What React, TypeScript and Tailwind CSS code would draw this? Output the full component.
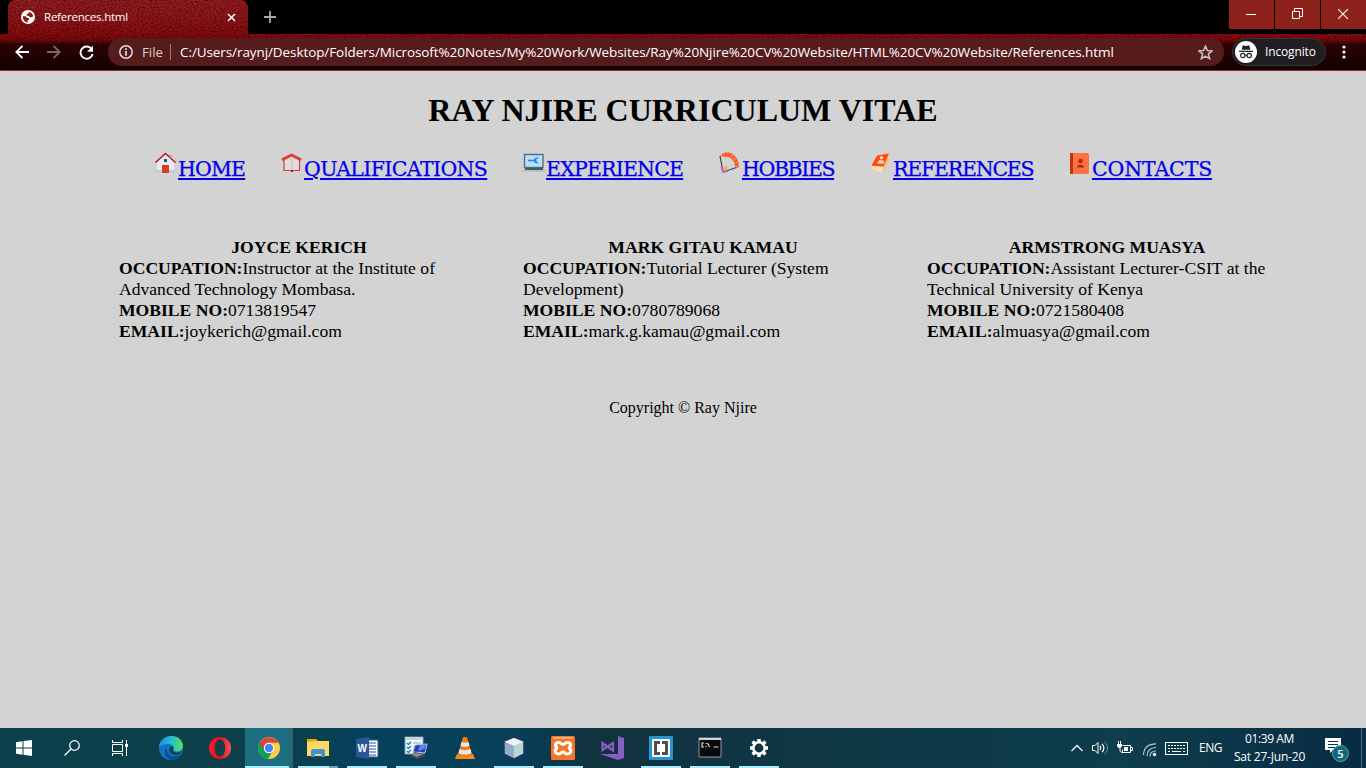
import type { ReactNode } from "react";

const ui = "font-['Open_Sans','Noto_Sans',sans-serif]";

function Svg({ w, h, vb, children, className = "" }: { w: number; h: number; vb?: string; children: ReactNode; className?: string }) {
  return (
    <svg width={w} height={h} viewBox={vb ?? `0 0 ${w} ${h}`} fill="none" className={`block shrink-0 ${className}`}>
      {children}
    </svg>
  );
}

function Texture({ id, w, h, shade }: { id: string; w: number; h: number; shade: ReactNode }) {
  return (
    <svg width={w} height={h} className="absolute inset-0">
      <defs>
        <linearGradient id={`${id}g`} x1="0" y1="0" x2="0" y2="1">{shade}</linearGradient>
        <filter id={`${id}n`} x="0" y="0" width="100%" height="100%">
          <feTurbulence type="fractalNoise" baseFrequency="0.7" numOctaves="2" seed="8" />
          <feColorMatrix values="0 0 0 0 0  0 0 0 0 0  0 0 0 0 0  1.3 0 0 0 -0.5" />
        </filter>
      </defs>
      <rect width={w} height={h} fill={`url(#${id}g)`} />
      <rect width={w} height={h} filter={`url(#${id}n)`} />
    </svg>
  );
}

function Tabs() {
  return (
    <div className="flex h-[34px] bg-[#030000]">
      <div className="relative ml-2 h-[34px] w-[240px] overflow-hidden rounded-t-lg bg-[#8b1216]">
        <Texture id="tab" w={240} h={34} shade={<><stop stopColor="#9c1d21" /><stop offset=".6" stopColor="#961619" /><stop offset="1" stopColor="#900a0e" /></>} />
        <div className="relative flex h-full items-center pl-[13px] pr-[12px]">
          <Svg w={14} h={14}>
            <circle cx="7" cy="7" r="7" fill="white" />
            <path d="M2 6.200h2.600l1.700 1.700H8v1.500L6.600 10.800v1.600C3.800 12.200 1.600 9.800 2 6.200ZM8.200 1.900c2 .5 3.600 2 4 4.400l-1.400 1H9L7.600 5.800H5.800V4.200l1.500-.6Z" fill="#8f171a" />
          </Svg>
          <span className={`${ui} ml-[9px] w-[84px] whitespace-nowrap text-[11.5px] leading-4 tracking-[-0.22px] text-[#fff]`}>References.html</span>
          <Svg w={9} h={9} className="ml-auto"><path d="m1 1 7 7M8 1 1 8" stroke="white" strokeWidth="1.5" /></Svg>
        </div>
      </div>
      <Svg w={12} h={12} className="ml-4 mt-[11px]"><path d="M6 0v12M0 6h12" stroke="#aaa" strokeWidth="1.8" /></Svg>
      <div className="ml-auto flex h-[29px] gap-px">
        <div className="grid w-[45px] place-items-center bg-[#8d211c]"><Svg w={10} h={10} className="-ml-0.5 -mt-0.5"><path d="M0 5.5h10" stroke="white" /></Svg></div>
        <div className="grid w-[45px] place-items-center bg-[#8d211c]"><Svg w={11} h={11} className="-mt-0.5"><path d="M.5 3.5h7v7h-7zM2.5 3.5v-3h8v8h-3" stroke="white" /></Svg></div>
        <div className="grid w-[45px] place-items-center bg-[#8d211c]"><Svg w={10} h={10} className="-ml-0.5 -mt-0.5"><path d="m0 0 10 10M10 0 0 10" stroke="white" strokeWidth="1.1" /></Svg></div>
      </div>
    </div>
  );
}

function Toolbar() {
  return (
    <div className="relative h-[37px] border-b border-[#8e2a2c]">
      <Texture id="bar" w={1366} h={36} shade={<><stop stopColor="#920a0f" /><stop offset=".16" stopColor="#7f080c" /><stop offset=".3" stopColor="#300304" /><stop offset="1" stopColor="#180102" /></>} />
      <div className="relative flex h-[36px] items-center">
        <Svg w={14} h={14} className="ml-[15px]"><path d="M14 7H1.5M7.5.8 1.3 7l6.2 6.2" stroke="white" strokeWidth="1.8" /></Svg>
        <Svg w={14} h={14} className="ml-[18px]"><path d="M0 7h12.5M6.5.8 12.7 7l-6.2 6.2" stroke="#816868" strokeWidth="1.8" /></Svg>
        <Svg w={15} h={15} className="ml-[18px]"><path d="M12.6 4A6.1 6.1 0 1 0 13.6 9" stroke="white" strokeWidth="1.9" /><path d="M14 .8v6H8Z" fill="white" /></Svg>
        <div className={`${ui} ml-[14px] flex h-7 w-[1116px] items-center rounded-full bg-[#561b1c] pl-[11px] leading-7`}>
          <Svg w={14} h={14}><circle cx="7" cy="7" r="6.2" stroke="#ddd" strokeWidth="1.5" /><path d="M7 6v4.7M7 3.2v1.7" stroke="#ddd" strokeWidth="1.7" /></Svg>
          <span className="ml-[9px] w-[22px] whitespace-nowrap text-[13.3px] text-[#ddcdcd]">File</span>
          <span className="ml-[6px] h-4 w-px bg-[#a07878]" />
          <span className="ml-[9px] w-[935px] whitespace-nowrap text-[13.5px] tracking-[-0.087px] text-white">C:/Users/raynj/Desktop/Folders/Microsoft%20Notes/My%20Work/Websites/Ray%20Njire%20CV%20Website/HTML%20CV%20Website/References.html</span>
          <Svg w={15} h={15} className="ml-auto mr-[11px]"><path d="m7.5 1 1.8 4.5 4.8.4-3.7 3 1.2 4.7-4.1-2.5-4.1 2.5 1.2-4.7-3.7-3 4.8-.4Z" stroke="#c9bdbd" strokeWidth="1.6" /></Svg>
        </div>
        <div className="ml-2 flex h-7 w-[94px] items-center rounded-full border border-[#3b3537] bg-[#211d20] pl-[2px]">
          <Svg w={22} h={22}>
            <circle cx="11" cy="11" r="11" fill="white" />
            <path d="M4 9.700h14v1.200H4zM6.600 8.800 7.800 4.200l3.200.7 3.200-.7 1.200 4.600Z" fill="#222" />
            <circle cx="7.800" cy="14.500" r="2.200" stroke="#222" strokeWidth="1.200" /><circle cx="14.200" cy="14.500" r="2.200" stroke="#222" strokeWidth="1.200" /><path d="M10 14.300h2" stroke="#222" />
          </Svg>
          <span className={`${ui} ml-[8px] whitespace-nowrap text-[12px] tracking-[-0.15px] text-white`}>Incognito</span>
        </div>
        <Svg w={4} h={14} className="ml-[16px]"><circle cx="2" cy="2" r="1.6" fill="white" /><circle cx="2" cy="7" r="1.6" fill="white" /><circle cx="2" cy="12" r="1.6" fill="white" /></Svg>
      </div>
    </div>
  );
}

const nav = [
  { label: "HOME", cls: "w-[67px] tracking-[-0.85px]", icon: <><path d="M3 10 11.5 2 20 10v10H3Z" fill="#e8eaf6" /><path d="M2 18h19v3H2z" fill="#c5cae9" /><path d="M8 13h7v8H8z" fill="#d84315" /><path d="M10 7h3v3h-3z" fill="#01579b" /><path d="m1.5 10.5 10-9 10 9" stroke="#b71c1c" strokeWidth="1.6" /><path d="M16 3h2v3h-2z" fill="#d79a94" /></> },
  { label: "QUALIFICATIONS", cls: "w-[183px] tracking-[-0.64px]", icon: <><path d="M4 8v10.500h8l.5.7.5-.7h6.500V8" stroke="#e53935" strokeWidth="1.200" /><path d="M5 8h13.500v10H5z" fill="#dedede" /><path d="M2 7.800 11.500 3 21 7.800" stroke="#e53935" strokeWidth="2.800" /><path d="M12 9v9" stroke="#b9b9b9" /><path d="M11 18h1.500v2H11z" fill="#a00000" /></> },
  { label: "EXPERIENCE", cls: "w-[137px] tracking-[-0.82px]", icon: <><path d="M2.500 2.500h18.500v13H2.500z" fill="#bbdefb" stroke="#546e7a" strokeWidth="1.400" /><path d="M6 8.500h6" stroke="#1e88e5" strokeWidth="1.600" /><path d="M17 6c-3-1-5 0-5 2.500s2 3.500 5 2.500l-2.500-1v-3Z" fill="#1e88e5" /><path d="M3 16h18v2.200H3z" fill="#455a64" /><path d="M0 18.300h24v1.400H0z" fill="#adc0c4" /></> },
  { label: "HOBBIES", cls: "w-[92px] tracking-[-1.4px]", icon: <><path d="M2 4 5 20M20 15 5 20" stroke="#37474f" strokeWidth="1.200" /><path d="M2 4C6-1.500 14-.5 18 5c2.500 3.500 3.500 8 2.500 11-1.500.3-2.500-.3-3.500-1.500 0-5-4-9.500-9-9.500-2.500.2-4.500 0-6-1Z" fill="#ff7043" /><path d="m8 1-.5 3.500M12 1.500l-1 3.500M16 4l-2 3M19 8l-3 2M20.500 12l-3.500 1" stroke="#d84315" strokeWidth=".8" /><circle cx="7.500" cy="16" r="1.900" fill="#ffa726" /><path d="m3.500 15 1.700 5 4.500-1" stroke="#ba68c8" strokeWidth="2.200" /></> },
  { label: "REFERENCES", cls: "w-[140px] tracking-[-1.22px]", icon: <><path d="m3 14 12-1 5-9-.3 5-6 11.500-1.700-.2L3 16.500Z" fill="#ffe0b2" /><path d="m14 15 5.500-10 .2 4-6 11.500Z" fill="#e6bf83" /><path d="m8 3.500 12-2-5.500 13-12-.8Z" fill="#ff4b12" /><circle cx="12.500" cy="5.800" r="1.700" fill="#ffd7c1" /><path d="m8 11.500 6.500.3.800-3-5-.8Z" fill="#ffd7c1" /></> },
  { label: "CONTACTS", cls: "w-[120px] tracking-[-0.14px]", icon: <><rect x="2" y="1" width="19" height="21" rx="1.500" fill="#ff7043" /><path d="M2 2c0-.6.400-1 1-1h2v21H3c-.6 0-1-.4-1-1Z" fill="#bf360c" /><circle cx="12.500" cy="9" r="2.200" fill="#a32e0a" /><path d="M9 15.500c0-3.700 7-3.700 7 0Z" fill="#a32e0a" /></> },
];

const people = [
  { name: "JOYCE KERICH", job: <>Instructor at the Institute of<br />Advanced Technology Mombasa.</>, mobile: "0713819547", email: "joykerich@gmail.com" },
  { name: "MARK GITAU KAMAU", job: <>Tutorial Lecturer (System<br />Development)</>, mobile: "0780789068", email: "mark.g.kamau@gmail.com" },
  { name: "ARMSTRONG MUASYA", job: <>Assistant Lecturer-CSIT at the<br />Technical University of Kenya</>, mobile: "0721580408", email: "almuasya@gmail.com" },
];

function Page() {
  return (
    <main className="flex h-[657px] flex-col bg-[#d3d3d3] font-['Liberation_Serif',serif] text-black">
      <h1 className="mt-[21px] text-center text-[32px] font-bold leading-[37px]">RAY NJIRE CURRICULUM VITAE</h1>
      <nav className="mt-[23px] flex h-[32px] gap-[35px] pl-[154px]">
        {nav.map((n) => (
          <div key={n.label} className="flex shrink-0">
            <Svg w={24} h={24}>{n.icon}</Svg>
            <a href="#" className={`mt-[3px] block whitespace-nowrap font-['DejaVu_Serif',serif] text-[20.5px] leading-[28px] text-[#0000ee] underline decoration-2 underline-offset-[2px] [-webkit-text-stroke:0.25px_#0000ee] ${n.cls}`}>{n.label}</a>
          </div>
        ))}
      </nav>
      <div className="mt-[53px] flex h-[105px] gap-[44px] pl-[119px] text-[17.6px] leading-[21px]">
        {people.map((p) => (
          <section key={p.name} className="w-[360px] shrink-0 whitespace-nowrap">
            <h2 className="text-center font-bold">{p.name}</h2>
            <p><b>OCCUPATION:</b>{p.job}</p>
            <p><b>MOBILE NO:</b>{p.mobile}</p>
            <p><b>EMAIL:</b>{p.email}</p>
          </section>
        ))}
      </div>
      <footer className="mt-[57px] text-center text-[16px] leading-[18px]">Copyright © Ray Njire</footer>
    </main>
  );
}

const apps: { id: string; on: boolean; icon: ReactNode }[] = [
  { id: "edge", on: false, icon: <><defs><linearGradient id="ea" x1="0" x2="1"><stop stopColor="#178ddb" /><stop offset=".55" stopColor="#28c1cc" /><stop offset="1" stopColor="#63dc55" /></linearGradient></defs><circle cx="12" cy="12" r="12" fill="#1273c5" /><path d="M0 11C1-3 23-4 24 10c0 5-6 7-10 4 3-5-5-9-14-3Z" fill="url(#ea)" /><path d="M8 12c-1 8 7 11 14 6-3 6-9 7-12 5-5-3-6-9-2-11Z" fill="#0c4d96" /><path d="M12 10c3 0 3 4 2 5 2 2 6 2 9 0-1 2-3 4-6 4-6 0-9-6-5-9Z" fill="#0b3f55" /></> },
  { id: "opera", on: false, icon: <><defs><linearGradient id="op"><stop stopColor="#ff1b2d" /><stop offset=".5" stopColor="#e30d20" /><stop offset="1" stopColor="#ff5257" /></linearGradient></defs><path fillRule="evenodd" d="M12 1a11 11 0 1 0 0 22 11 11 0 0 0 0-22Zm0 2.500c3 0 5.200 3.500 5.200 8.500S15 20.500 12 20.500 6.800 17 6.800 12 9 3.500 12 3.500Z" fill="url(#op)" /></> },
  { id: "chrome", on: true, icon: <><circle cx="12" cy="12" r="11" fill="#ffcd40" /><path d="M12 12 2.500 6.500A11 11 0 0 0 11 23l5-8.500Z" fill="#0f9d58" /><path d="M2.500 6.500A11 11 0 0 1 21.500 6.800H12A5.200 5.200 0 0 0 7.200 14Z" fill="#db4437" /><circle cx="12" cy="12" r="5.200" fill="white" /><circle cx="12" cy="12" r="4.200" fill="#4285f4" /></> },
  { id: "explorer", on: true, icon: <><path d="M1 3h9l2 2h11v15H1Z" fill="#f0a800" /><path d="M1 6l11-1h11v15H1Z" fill="#ffd765" /><path d="M5 21v-6c0-1 1-2 2-2h10c1 0 2 1 2 2v6h-4v-3H9v3Z" fill="#3d91d7" /></> },
  { id: "word", on: true, icon: <><path d="M12 4h11v17H12Z" fill="white" stroke="#2b579a" /><path d="M14 7h7M14 10h7M14 13h7M14 16h7M14 19h7" stroke="#2b579a" /><path d="m1 3 13-2v22L1 21Z" fill="#2b579a" /><text x="2.500" y="16" fontSize="10" fontWeight="bold" fontFamily="Liberation Sans" fill="white">W</text></> },
  { id: "system", on: true, icon: <><path d="M1 1h18v17H1Z" fill="#f5f7f9" stroke="#8097a8" /><path d="M1 1h18v3H1Z" fill="#c6d3dd" /><path d="m3 7 1.500 1.500L7 6M3 11l1.500 1.500L7 10M3 15l1.500 1.500L7 14" stroke="#1688c9" strokeWidth="1.500" /><path d="M9 7h8M9 11h3" stroke="#93a5b0" /><path d="m11 9 12-1-2 9-12-1Z" fill="#2040bb" stroke="#b8cad8" /><path d="m16 9 6-.5-1 4-7 3Z" fill="#5d82ed" /><path d="m10 16 11 2v2l-8 3-6-3Z" fill="#464957" /><path d="m10 17 9 1-6 3-5-2Z" fill="#8a8c99" /></> },
  { id: "vlc", on: false, icon: <><path d="M4 18h16l2 5H2Z" fill="#f08b18" /><path d="M10 1h4l5 18c-2 2-12 2-14 0Z" fill="#ef7b14" /><path d="m8.500 6-1 4c2 1 7 1 9 0l-1-4c-2 1-5 1-7 0ZM6.500 13l-1 4c3 2 10 2 13 0l-1-4c-3 1.500-8 1.500-11 0Z" fill="#e9e8e6" /></> },
  { id: "netbeans", on: true, icon: <><path d="m12 1 10 4v13l-10 5-10-5V5Z" fill="#c0d4e5" stroke="#24375f" strokeWidth="1.600" /><path d="m12 2 9 4-9 4-9-4Z" fill="#edf3f6" /><path d="m3 6 9 4v12l-9-5Z" fill="#8facc8" /><path d="m21 6-9 4v12l9-5Z" fill="#b9d6d0" /></> },
  { id: "xampp", on: true, icon: <><rect width="24" height="24" rx="1.500" fill="#f37623" /><path d="M2 1h20v2H2z" fill="#f3ac7d" /><path d="M8 6.500c-5 0-4 5-1 5.500-4 0-4 6 1 6 2 0 2-2 4-2s2 2 4 2c5 0 5-6 1-6 3-.5 4-5.500-1-5.500-2 0-2 2-4 2s-2-2-4-2Z" stroke="white" strokeWidth="3" /></> },
  { id: "vs", on: false, icon: <><path d="m18 0 6 2v20l-6 2-18-6h18Z" fill="#865fc5" /><path d="M2.500 7v7l10.500-7v7.500Z" stroke="#865fc5" strokeWidth="2.200" /></> },
  { id: "brackets", on: true, icon: <><rect width="24" height="24" rx="1" fill="#2196d5" /><rect x="3" y="3" width="18" height="18" fill="white" /><path d="M11 6.500H6.500v11H11M13 6.500h4.500v11H13" stroke="#505050" strokeWidth="3" /></> },
  { id: "terminal", on: true, icon: <><path d="M1 2h22v19H1z" fill="#080909" stroke="#92999d" /><path d="M1 2h22v2H1z" fill="#d1d5dc" /><path d="M6 7H4v4h2M8 7v1m0 2v1m1.500-4 2 4m4 0h5" stroke="#ddd" strokeWidth="1.200" /></> },
  { id: "settings", on: true, icon: <><circle cx="12" cy="12" r="5.700" stroke="white" strokeWidth="2.600" /><path d="M12 3v3M12 18v3M3 12h3M18 12h3m-15.400-6.400 2.200 2.200m8.400 8.400 2.200 2.200m0-12.800-2.200 2.200m-8.400 8.400-2.200 2.200" stroke="white" strokeWidth="3.500" /></> },
];

function Taskbar() {
  return (
    <footer className="flex h-10 bg-[linear-gradient(90deg,#0b404a_0%,#0c3f4a_21%,#06415b_26%,#063f58_38%,#11323f_43%,#0e3845_65%,#0e3d4c_82%,#082c43_100%)]">
      <div className="flex w-[147px] shrink-0">
        <div className="grid w-12 place-items-center"><Svg w={16} h={16}><path d="m0 2.200 6.500-.9v6.200H0ZM7.500 1.100 16 0v7.500H7.500ZM0 8.500h6.500v6.200L0 13.800ZM7.500 8.500H16V16l-8.500-1.200Z" fill="white" /></Svg></div>
        <div className="grid w-12 place-items-center"><Svg w={16} h={16}><circle cx="10.500" cy="5.500" r="4.800" stroke="white" strokeWidth="1.200" /><path d="M7 9 .5 15.500" stroke="white" strokeWidth="1.300" /></Svg></div>
        <div className="grid w-12 place-items-center"><Svg w={16} h={16}><path d="M.5 0v2.500h10V0M.5 4.500h10v7H.5ZM.5 16v-2.500h10V16M14.500 0v16" stroke="white" /><path d="M13 4h3v3h-3z" fill="white" /></Svg></div>
      </div>
      <div className="flex gap-px">
        {apps.map((a) => (
          <div key={a.id} className={`flex w-12 flex-col items-center ${a.id === "chrome" ? "border-r-4 border-[#2b6473] bg-[#1c6e81] pl-[3px]" : ""}`}>
            <Svg w={24} h={24} className="mb-[6px] mt-2">{a.icon}</Svg>
            {a.on && <span className={a.id === "chrome" ? "-ml-[3px] h-0.5 w-[44px] shrink-0 bg-[#a9eaff]" : a.id === "explorer" ? "h-0.5 w-10 bg-[linear-gradient(90deg,#a9eaff_78%,#759fac_78%)]" : "h-0.5 w-10 bg-[#a9eaff]"} />}
          </div>
        ))}
      </div>
      <div className={`${ui} ml-auto flex items-center text-[12px] text-white`}>
        <Svg w={12} h={8}><path d="m.5 7 5.500-5.500L11.500 7" stroke="#eef4f5" strokeWidth="1.300" /></Svg>
        <Svg w={16} h={14} className="ml-[9px]"><path d="M.5 4.500h2.500l3-3v11L3 9.500H.5Z" stroke="white" /><path d="M8 5c1 1 1 3 0 4M10 3c2.500 2 2.500 6 0 8" stroke="white" strokeWidth="1.200" /><path d="M12.500 1c4 3 4 9 0 12" stroke="#739099" /></Svg>
        <Svg w={16} h={14} className="ml-[9px]"><path d="M5.500 4.500h8v7h-8v-3M14 6.500h1.500v3H14M3 7v2c0 2 1 2.500 3 2.500" stroke="white" /><path d="M7 6h4v4H7zM0 3h5v2L3.500 7h-2L0 5ZM1 0h1v3H1zM3 0h1v3H3z" fill="white" /></Svg>
        <Svg w={14} h={14} className="ml-[10px] mt-1"><path d="M.5 12C.5 5 5 .8 13 .8M4 13c0-5 3-8.500 9-8.500M7 13.500c0-3 2-5.500 6-5.500" stroke="#b9c8cc" strokeWidth="1.200" /><circle cx="11.500" cy="11.500" r="1.700" fill="white" /></Svg>
        <Svg w={23} h={13} className="ml-[8px]"><rect x=".5" y=".5" width="22" height="12" stroke="white" /><path d="M3 3.500h17M3 6.500h17" stroke="white" strokeDasharray="2 1" /><path d="M3 9.500h2M7 9.500h9M18 9.500h2" stroke="white" /></Svg>
        <span className="ml-[11px] w-[23px] tracking-[-0.5px]">ENG</span>
        <div className="ml-[11px] mr-px w-[73px] whitespace-nowrap text-center text-[12px] leading-[18px] tracking-[-0.2px]"><div className="tracking-[-0.4px]">01:39 AM</div><div>Sat 27-Jun-20</div></div>
        <Svg w={24} h={26} className="ml-[18px] mt-[3px]"><path d="M0 1h16v12H8l-3 3v-3H0Z" fill="white" /><path d="M3 4.500h10M3 7.500h10M3 10.500h7" stroke="#0b344a" /><circle cx="15.500" cy="16.500" r="8" fill="#12677e" stroke="#5d9bae" /><text x="15.500" y="20.500" textAnchor="middle" fontFamily="Open Sans" fontSize="11" fontWeight="600" fill="white">5</text></Svg>
        <span className="ml-[12px] mr-1 h-10 w-px bg-[#52727f]" />
      </div>
    </footer>
  );
}

export default function App() {
  return (
    <div className="h-[768px] w-[1366px] overflow-hidden bg-[#d3d3d3]">
      <Tabs />
      <Toolbar />
      <Page />
      <Taskbar />
    </div>
  );
}
